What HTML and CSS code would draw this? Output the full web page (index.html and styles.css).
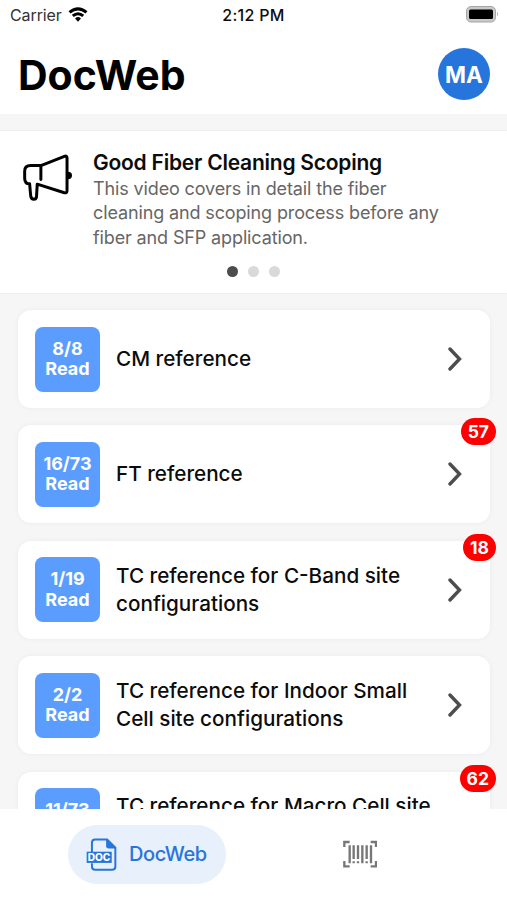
FILE: index.html
```
<!DOCTYPE html>
<html lang="en">
<head>
    <meta charset="UTF-8">
    <meta name="viewport" content="width=device-width, initial-scale=1.0">
    <title>DocWeb</title>
    <link rel="stylesheet" href="styles.css">
</head>
<body>
    <div class="status-bar">
        <div class="carrier">
            <span>Carrier</span>
            <svg class="wifi" viewBox="0 0 60 46">
                <path d="M1 13Q30-11 59 13L53 20Q30 1 7 20Z"/>
                <path d="M11 24Q30 8 49 24L43 31Q30 19 17 31Z"/>
                <path d="M21 35Q30 27 39 35L30 45Z"/>
            </svg>
        </div>
        <span class="time">2:12 PM</span>
        <svg class="battery" viewBox="0 0 33 17">
            <rect x=".5" y=".5" width="29" height="15.5" rx="4.5" fill="#c9c9c9" stroke="#a5a5a5"/>
            <rect x="3" y="3.5" width="24" height="9.5" rx="1.5"/>
            <path d="M31 6Q33 8.200 31 10.500Z" fill="#aaa"/>
        </svg>
    </div>

    <header class="header">
        <h1>DocWeb</h1>
        <div class="avatar">MA</div>
    </header>

    <section class="news">
        <div class="news-item">
            <svg class="megaphone" viewBox="66 70 152 142">
                <path d="M122 105H91Q73 105 73 122V143Q73 160 88 160L91 194Q92 207 101 207Q109 207 109 196L111 161L193 187Q201 189 201 181V82Q201 74 193 77L122 105V147"/>
                <path class="knob" d="M204 124Q216 124 216 135Q216 146 204 146Z"/>
            </svg>
            <div>
                <h2>Good Fiber Cleaning Scoping</h2>
                <p>This video covers in detail the fiber<br>cleaning and scoping process before any<br>fiber and SFP application.</p>
            </div>
        </div>
        <div class="dots">
            <span class="dot active"></span>
            <span class="dot"></span>
            <span class="dot"></span>
        </div>
    </section>

    <main class="list">
        <div class="card">
            <div class="progress">8/8<br>Read</div>
            <div class="title">CM reference</div>
            <svg class="chevron" viewBox="0 0 14 24"><path d="M2 2L11.500 12L2 22"/></svg>
        </div>
        <div class="card">
            <div class="progress">16/73<br>Read</div>
            <div class="title">FT reference</div>
            <svg class="chevron" viewBox="0 0 14 24"><path d="M2 2L11.500 12L2 22"/></svg>
            <span class="count">57</span>
        </div>
        <div class="card">
            <div class="progress">1/19<br>Read</div>
            <div class="title">TC reference for C-Band site<br>configurations</div>
            <svg class="chevron" viewBox="0 0 14 24"><path d="M2 2L11.500 12L2 22"/></svg>
            <span class="count">18</span>
        </div>
        <div class="card">
            <div class="progress">2/2<br>Read</div>
            <div class="title">TC reference for Indoor Small<br>Cell site configurations</div>
            <svg class="chevron" viewBox="0 0 14 24"><path d="M2 2L11.500 12L2 22"/></svg>
        </div>
        <div class="card">
            <div class="progress">11/73<br>Read</div>
            <div class="title">TC reference for Macro Cell site<br>&nbsp;</div>
            <span class="count">62</span>
        </div>
    </main>

    <nav class="tabs">
        <a class="tab active">
            <svg class="doc-icon" viewBox="258 262 94 102">
                <path class="page" d="M276 304V276Q276 266 286 266H322L347 291V348Q347 358 337 358H286Q276 358 276 348V338"/>
                <path class="fold" d="M319 265L348 293H327Q319 293 319 285Z"/>
                <rect class="label" x="260" y="303" width="76" height="34"/>
                <text x="263" y="331" textLength="69" lengthAdjust="spacingAndGlyphs">DOC</text>
            </svg>
            <span>DocWeb</span>
        </a>
        <a class="tab scan">
            <svg class="barcode" viewBox="266 270 102 84">
                <path d="M270 291V276H286M349 276H365V291M270 333V349H286M349 349H365V333"/>
                <path d="M286 286V340M298 286V327M311 286V327M324 286V340M337 286V327M350 286V340M298 334V340M311 334V340M337 334V340"/>
            </svg>
        </a>
    </nav>
</body>
</html>
```

FILE: styles.css
```
* {
    box-sizing: border-box;
}
body {
    margin: 0;
    height: 900px;
    display: flex;
    flex-direction: column;
    overflow: hidden;
    font-family: Inter, sans-serif;
    color: #0c0c0c;
    background-color: #f6f6f6;
}
.status-bar {
    flex: none;
    height: 30px;
    display: grid;
    grid-template-columns: 1fr auto 1fr;
    align-items: center;
    padding: 0 8px 0 10px;
    background-color: #fff;
    font-size: 16px;
}
.carrier {
    display: flex;
    align-items: center;
    gap: 6px;
    color: #333;
    letter-spacing: -0.1px;
}
.wifi {
    width: 20px;
    height: 15px;
    margin-bottom: 1px;
}
.time {
    margin-right: 2px;
    font-weight: 500;
    letter-spacing: 0.3px;
}
.battery {
    justify-self: end;
    width: 33px;
    height: 17px;
    margin-bottom: 2px;
}
.header {
    flex: none;
    height: 84px;
    display: flex;
    align-items: center;
    justify-content: space-between;
    padding: 4px 17px 0 18px;
    background-color: #fff;
}
h1, h2, p {
    margin: 0;
}
h1 {
    padding-top: 2px;
    font-size: 41px;
    font-weight: 700;
    line-height: 50px;
    color: #000;
}
.avatar {
    width: 52px;
    height: 52px;
    display: flex;
    align-items: center;
    justify-content: center;
    border-radius: 50%;
    background-color: #2675dc;
    color: #fff;
    font-size: 22.5px;
    font-weight: 700;
}
.news {
    flex: none;
    height: 162px;
    margin-top: 17px;
    padding: 19px 22px 0;
    background-color: #fff;
    box-shadow: 0 0 2px rgba(0, 0, 0, 0.1);
}
.news-item {
    display: flex;
    gap: 20px;
}
.megaphone {
    flex: none;
    width: 51px;
    height: 47px;
    margin-top: 4px;
    fill: none;
    stroke: #000;
    stroke-width: 9;
    stroke-linejoin: round;
    stroke-linecap: round;
}
.megaphone .knob {
    fill: #000;
    stroke: none;
}
h2 {
    font-size: 21px;
    font-weight: 600;
    line-height: 26px;
    letter-spacing: -0.23px;
    white-space: nowrap;
}
p {
    padding-top: 1px;
    font-size: 18px;
    line-height: 24.3px;
    letter-spacing: -0.13px;
    color: #666;
    white-space: nowrap;
}
.dots {
    display: flex;
    justify-content: center;
    gap: 10px;
    margin-top: 16px;
}
.dot {
    width: 11px;
    height: 11px;
    border-radius: 50%;
    background-color: #d9d9d9;
}
.dot.active {
    background-color: #4c4c4c;
}
.list {
    flex: 1;
    min-height: 0;
    overflow: hidden;
    display: flex;
    flex-direction: column;
    gap: 17.4px;
    padding: 17px 17px 0 18px;
}
.card {
    position: relative;
    flex: none;
    height: 98px;
    display: flex;
    align-items: center;
    gap: 17px;
    padding: 0 28px 0 17px;
    border-radius: 13px;
    background-color: #fff;
    box-shadow: 0 0 5px rgba(0, 0, 0, 0.05);
}
.progress {
    flex: none;
    width: 65px;
    height: 65px;
    padding-top: 12px;
    border-radius: 8px;
    background-color: #5b9dff;
    color: #fff;
    font-size: 18px;
    font-weight: 700;
    line-height: 20.5px;
    text-align: center;
}
.title {
    flex: 1;
    margin-left: -1px;
    font-size: 20.7px;
    font-weight: 500;
    line-height: 28.2px;
    white-space: nowrap;
}
.chevron {
    flex: none;
    width: 14px;
    height: 24px;
    fill: none;
    stroke: #4d4d4d;
    stroke-width: 3.4;
    stroke-linecap: round;
}
.count {
    position: absolute;
    top: -7px;
    right: -6px;
    height: 27px;
    padding: 0 7px;
    border-radius: 14px;
    background-color: #ff0000;
    color: #fff;
    font-size: 17.5px;
    font-weight: 700;
    line-height: 27px;
}
.tabs {
    flex: none;
    height: 91px;
    display: flex;
    align-items: flex-start;
    padding: 16px 40px 0 68px;
    background-color: #fff;
}
.tab {
    display: flex;
    align-items: center;
    height: 59px;
}
.tab.active {
    width: 158px;
    gap: 12px;
    padding-left: 18px;
    border-radius: 30px;
    background-color: #e7f0fb;
    color: #2675dc;
    font-size: 20px;
    font-weight: 500;
    letter-spacing: -0.4px;
}
.tab span {
    margin-top: -1px;
}
.doc-icon {
    width: 31px;
    height: 34px;
}
.page {
    fill: none;
    stroke: #2675dc;
    stroke-width: 6;
}
.fold, .label {
    fill: #2675dc;
}
.doc-icon text {
    fill: #fff;
    font-size: 32px;
    font-weight: 800;
    letter-spacing: 0;
}
.scan {
    margin-left: 117px;
}
.barcode {
    width: 34px;
    height: 28px;
    margin-top: -2px;
    fill: none;
    stroke: #777;
    stroke-width: 7;
}
```
